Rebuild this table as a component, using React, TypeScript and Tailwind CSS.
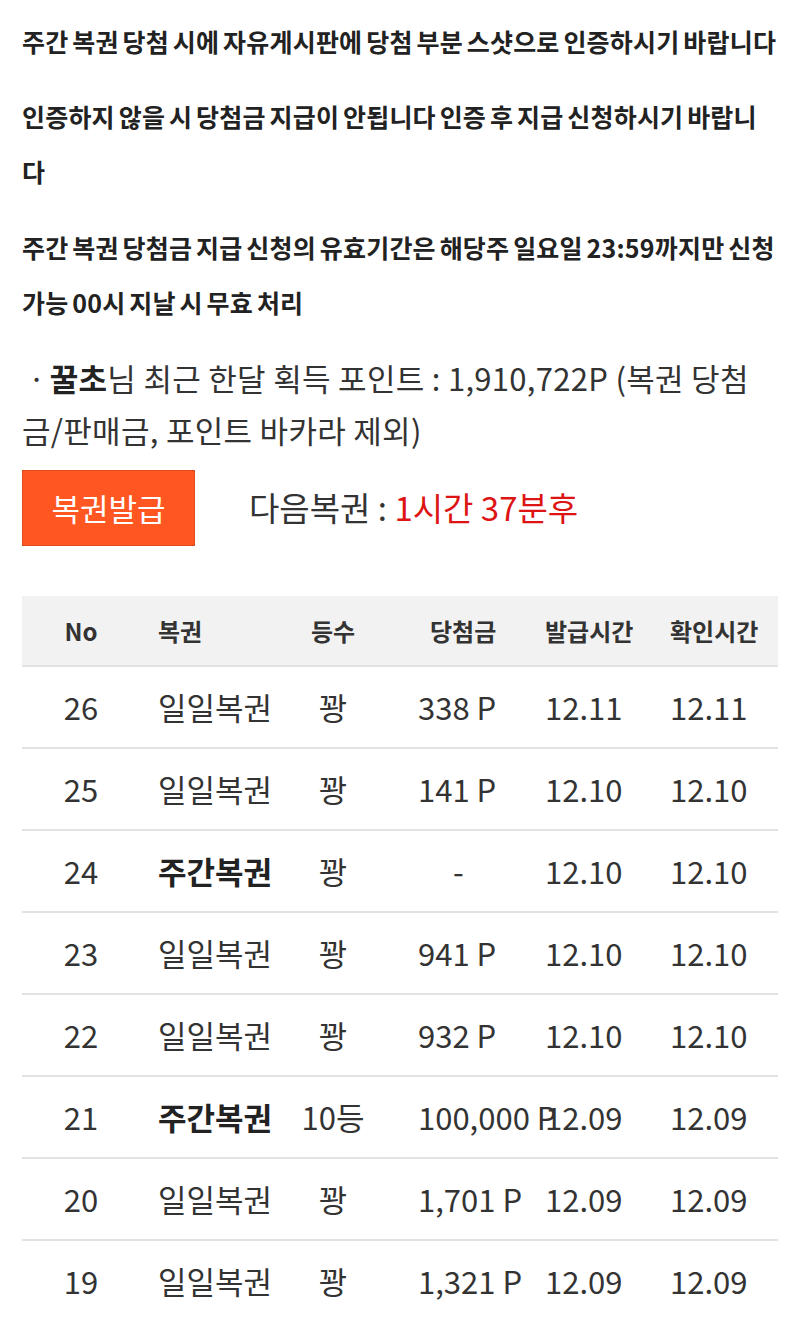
const rows = [
  { no: 26, name: "일일복권", weekly: false, rank: "꽝", prize: "338 P", issued: "12.11", checked: "12.11" },
  { no: 25, name: "일일복권", weekly: false, rank: "꽝", prize: "141 P", issued: "12.10", checked: "12.10" },
  { no: 24, name: "주간복권", weekly: true, rank: "꽝", prize: "-", issued: "12.10", checked: "12.10" },
  { no: 23, name: "일일복권", weekly: false, rank: "꽝", prize: "941 P", issued: "12.10", checked: "12.10" },
  { no: 22, name: "일일복권", weekly: false, rank: "꽝", prize: "932 P", issued: "12.10", checked: "12.10" },
  { no: 21, name: "주간복권", weekly: true, rank: "10등", prize: "100,000 P", issued: "12.09", checked: "12.09" },
  { no: 20, name: "일일복권", weekly: false, rank: "꽝", prize: "1,701 P", issued: "12.09", checked: "12.09" },
  { no: 19, name: "일일복권", weekly: false, rank: "꽝", prize: "1,321 P", issued: "12.09", checked: "12.09" },
]

const cols = "grid grid-cols-[118px_150px_86px_169px_125px_108px]"

export default function App() {
  return (
    <div className="min-h-[1320px] bg-white px-[22px] pt-[14px] font-['Noto_Sans_CJK_KR',sans-serif] text-[#333]">
      <div className="text-[25px] font-bold leading-[55px] tracking-[0.2px] text-[#222] [word-spacing:-2px] whitespace-nowrap">
        <p>주간 복권 당첨 시에 자유게시판에 당첨 부분 스샷으로 인증하시기 바랍니다</p>
        <p className="mt-[20px]">
          인증하지 않을 시 당첨금 지급이 안됩니다 인증 후 지급 신청하시기 바랍니
          <br />다
        </p>
        <p className="mt-[21px]">
          주간 복권 당첨금 지급 신청의 유효기간은 해당주 일요일 23:59까지만 신청
          <br />
          가능 00시 지날 시 무효 처리
        </p>
      </div>

      <p className="mt-[22px] whitespace-nowrap text-[31px] leading-[52px] tracking-[0.3px]">
        <span className="ml-[6px] mr-[4px]">·</span>
        <b className="font-bold text-[#222]">꿀초</b>님 최근 한달 획득 포인트 : 1,910,722P (복권 당첨
        <br />
        금/판매금, 포인트 바카라 제외)
      </p>

      <div className="mt-[14px] flex items-center">
        <button className="h-[76px] w-[173px] border border-[#e04d1c] bg-[#ff5622] text-[31px] text-white">
          복권발급
        </button>
        <div className="ml-[54px] text-[33px]">
          다음복권 : <span className="text-[#dd1414]">1시간 37분후</span>
        </div>
      </div>

      <div className="mt-[50px]">
        <div className={`${cols} h-[71px] items-center border-b-2 border-[#e2e2e2] bg-[#f2f2f2] text-[24px] font-bold text-[#333]`}>
          <div className="text-center">No</div>
          <div className="pl-[18px]">복권</div>
          <div className="text-center">등수</div>
          <div className="pl-[54px]">당첨금</div>
          <div>발급시간</div>
          <div>확인시간</div>
        </div>
        {rows.map((r) => (
          <div key={r.no} className={`${cols} h-[82px] items-center whitespace-nowrap border-b-2 border-[#e2e2e2] text-[31px]`}>
            <div className="text-center">{r.no}</div>
            <div className={r.weekly ? "pl-[18px] font-bold text-[#222]" : "pl-[18px]"}>{r.name}</div>
            <div className="text-center">{r.rank}</div>
            <div className={r.prize === "-" ? "pl-[77px]" : "pl-[42px]"}>{r.prize}</div>
            <div>{r.issued}</div>
            <div>{r.checked}</div>
          </div>
        ))}
      </div>
    </div>
  )
}
